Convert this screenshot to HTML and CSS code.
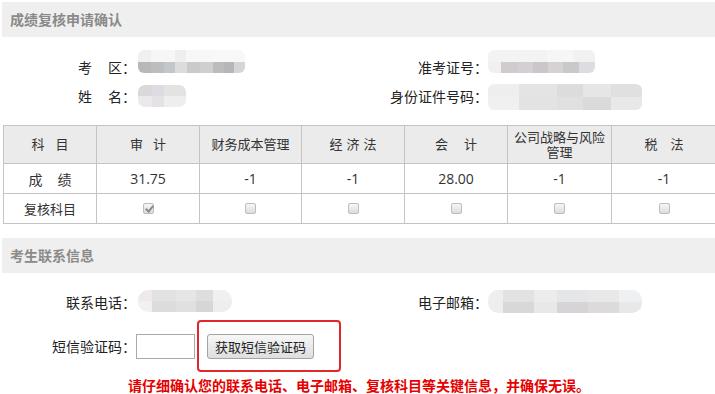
FILE: index.html
```html
<!DOCTYPE html>
<html lang="zh-CN">
<head>
<meta charset="utf-8">
<title>成绩复核申请确认</title>
<link rel="stylesheet" href="styles.css">
</head>
<body>
<div class="page">
  <div class="bar">成绩复核申请确认</div>

  <div class="info">
    <div class="lbl">考<span class="sp16"></span>区：</div>
    <div class="val"><div class="mosaic v-area"><div class="mt"></div><div class="mb"></div></div></div>
    <div class="lbl">准考证号：</div>
    <div class="val"><div class="mosaic v-ticket"><div class="mt"></div><div class="mb"></div></div></div>

    <div class="lbl">姓<span class="sp16"></span>名：</div>
    <div class="val"><div class="mosaic v-name"><div class="mt"></div><div class="mb"></div></div></div>
    <div class="lbl">身份证件号码：</div>
    <div class="val"><div class="mosaic v-id"><div class="mt"></div><div class="mb"></div></div></div>
  </div>

  <table class="scores">
    <colgroup>
      <col class="c1"><col class="c2"><col class="c3"><col class="c4"><col class="c5"><col class="c6"><col class="c7">
    </colgroup>
    <thead>
      <tr>
        <th>科<span class="sp11"></span>目</th>
        <th>审<span class="sp10"></span>计</th>
        <th>财务成本管理</th>
        <th>经<span class="sp4"></span>济<span class="sp4"></span>法</th>
        <th>会<span class="sp16"></span>计</th>
        <th class="wrap">公司战略与风险管理</th>
        <th>税<span class="sp13"></span>法</th>
      </tr>
    </thead>
    <tbody>
      <tr class="score-row">
        <td>成<span class="sp15"></span>绩</td>
        <td>31.75</td>
        <td>-1</td>
        <td>-1</td>
        <td>28.00</td>
        <td>-1</td>
        <td>-1</td>
      </tr>
      <tr class="check-row">
        <td>复核科目</td>
        <td><input type="checkbox" class="cb" checked disabled></td>
        <td><input type="checkbox" class="cb" disabled></td>
        <td><input type="checkbox" class="cb" disabled></td>
        <td><input type="checkbox" class="cb" disabled></td>
        <td><input type="checkbox" class="cb" disabled></td>
        <td><input type="checkbox" class="cb" disabled></td>
      </tr>
    </tbody>
  </table>

  <div class="bar bar2">考生联系信息</div>

  <div class="contact">
    <div class="lbl">联系电话：</div>
    <div class="val"><div class="mosaic v-phone"><div class="mt"></div><div class="mb"></div></div></div>
    <div class="lbl">电子邮箱：</div>
    <div class="val"><div class="mosaic v-mail"><div class="mt"></div><div class="mb"></div></div></div>
  </div>

  <div class="sms">
    <div class="lbl">短信验证码：</div>
    <div class="sms-ctrl">
      <input type="text" class="code-input">
      <span class="btn-wrap">
        <button type="button" class="sms-btn">获取短信验证码</button>
        <span class="mark"></span>
      </span>
    </div>
  </div>

  <p class="notice">请仔细确认您的联系电话、电子邮箱、复核科目等关键信息，并确保无误。</p>
</div>
</body>
</html>
```

FILE: styles.css
```css
html, body {
  margin: 0;
  padding: 0;
  background: #fff;
  overflow: hidden;
}
body {
  font-family: "Open Sans", "Noto Sans CJK SC", sans-serif;
  font-size: 14px;
  color: #222;
}
.page {
  padding: 2px 0 0 2px;
}
.bar {
  height: 35px;
  background: #efefef;
  color: #8a8a8a;
  font-weight: bold;
  font-size: 14px;
  line-height: 35px;
  padding-left: 8px;
  font-family: "Noto Sans CJK SC", sans-serif;
}
.bar2 {
  margin-top: 14px;
}
.sp4, .sp10, .sp11, .sp13, .sp15, .sp16 { display: inline-block; }
.sp4 { width: 4px; }
.sp10 { width: 10px; }
.sp11 { width: 11px; }
.sp13 { width: 13px; }
.sp15 { width: 15px; }
.sp16 { width: 16px; }

.info, .contact {
  display: grid;
  grid-template-columns: 134px 218px 134px 1fr;
  grid-auto-rows: 29px;
  margin-top: 16px;
}
.contact { margin-top: 15px; }
.lbl {
  text-align: right;
  line-height: 29px;
  white-space: nowrap;
  font-family: "Noto Sans CJK SC", sans-serif;
  color: #222;
}
.val {
  display: flex;
  align-items: flex-start;
}
.mosaic {
  display: flex;
  flex-direction: column;
  border-radius: 6px;
  overflow: hidden;
  filter: blur(0.7px);
}
.mosaic .mt, .mosaic .mb { flex: 1; }

.v-area { width: 107px; height: 23px; margin-top: -3px; margin-left: 2px; }
.v-area .mt { background: linear-gradient(to right, #f0f0f0 0 12%, #f6f6f6 12% 35%, #eeeeee 35% 45%, #f7f7f7 45% 70%, #f8f8f8 70% 100%); }
.v-area .mb { background: linear-gradient(to right, #b8b8b8 0 12%, #bdbdbd 12% 24%, #c3c7cb 24% 35%, #dcdcdc 35% 46%, #cacaca 46% 58%, #cfcfcf 58% 70%, #bcbcbc 70% 80%, #b7b5b7 80% 90%, #d3d5d7 90% 100%); }

.v-name { width: 48px; height: 22px; margin-top: 3px; margin-left: 2px; border-radius: 7px; }
.v-name .mt { background: linear-gradient(to right, #dcd7db 0 30%, #dedce2 30% 55%, #e3e3e3 55% 100%); }
.v-name .mb { background: linear-gradient(to right, #ece8ec 0 30%, #e4e1e7 30% 55%, #eeeeee 55% 100%); }

.v-ticket { width: 107px; height: 23px; margin-top: -3px; }
.v-ticket .mt { background: linear-gradient(to right, #f3f3f3 0 55%, #f6f6f6 55% 80%, #f1f1f1 80% 100%); }
.v-ticket .mb { background: linear-gradient(to right, #f0f0f0 0 12%, #d0cbcf 12% 28%, #d3cfd3 28% 42%, #cbc6ca 42% 56%, #d6d2d4 56% 70%, #c9c9c9 70% 85%, #dcdde0 85% 100%); }

.v-id { width: 154px; height: 26px; margin-top: 2px; }
.v-id .mt { background: linear-gradient(to right, #eeeeee 0 20%, #e4e4e4 20% 45%, #dcdcdc 45% 62%, #e6e6e6 62% 80%, #e0e0e0 80% 100%); }
.v-id .mb { background: linear-gradient(to right, #f0f0f0 0 20%, #e3e3e3 20% 45%, #e0e0e0 45% 62%, #dadada 62% 80%, #e8e8e8 80% 100%); }

.v-phone { width: 94px; height: 22px; margin-top: 2px; margin-left: 2px; border-radius: 10px; }
.v-phone .mt { background: linear-gradient(to right, #eeeaeb 0 15%, #e2e2e2 15% 40%, #e6e6e6 40% 62%, #dedede 62% 80%, #f0f0f0 80% 100%); }
.v-phone .mb { background: linear-gradient(to right, #f2f0f1 0 15%, #dcdcdc 15% 40%, #e0e0e0 40% 62%, #d6d6d6 62% 80%, #eeeeee 80% 100%); }

.v-mail { width: 154px; height: 23px; margin-top: 2px; border-radius: 10px; }
.v-mail .mt { background: linear-gradient(to right, #eeeeee 0 10%, #e2e2e2 10% 30%, #ececec 30% 45%, #e4e6e8 45% 65%, #e8e8e8 65% 85%, #eef0f2 85% 100%); }
.v-mail .mb { background: linear-gradient(to right, #eeeeee 0 10%, #d8d8d8 10% 30%, #e8e8e8 30% 45%, #d6d4d6 45% 65%, #dcdada 65% 85%, #e6e8ea 85% 100%); }

.scores {
  border-collapse: collapse;
  table-layout: fixed;
  width: 713px;
  margin: 14px 0 0 1px;
  font-size: 13px;
  color: #333;
  font-family: "Open Sans", "Noto Sans CJK SC", sans-serif;
}
.c1 { width: 93px; }
.c2 { width: 103px; }
.c3 { width: 102px; }
.c4 { width: 103px; }
.c5 { width: 103px; }
.c6 { width: 104px; }
.c7 { width: 105px; }
.scores th, .scores td {
  border: 1px solid #c4c4c4;
  text-align: center;
  padding: 0;
  font-weight: normal;
}
.scores th {
  background: #ebebeb;
  height: 37px;
  line-height: 15px;
}
.scores th.wrap {
  padding: 0 6px;
}
.scores td {
  height: 29px;
}
.score-row td {
  font-size: 14px;
}
.check-row td {
  line-height: 0;
}
.cb {
  -webkit-appearance: none;
  appearance: none;
  width: 11px;
  height: 11px;
  margin: 0;
  border: 1px solid #bdbdbd;
  border-radius: 2px;
  background: linear-gradient(#f7f7f7, #dcdcdc);
  vertical-align: middle;
  position: relative;
}
.cb:checked::after {
  content: "";
  position: absolute;
  left: 3px;
  top: 0px;
  width: 3px;
  height: 6px;
  border: solid #8a8a8a;
  border-width: 0 2px 2px 0;
  transform: rotate(40deg);
}

.sms {
  display: flex;
  align-items: center;
  height: 29px;
  margin-top: 15px;
}
.sms .lbl {
  width: 134px;
}
.sms-ctrl {
  display: flex;
  align-items: center;
}
.code-input {
  width: 59px;
  height: 25px;
  box-sizing: border-box;
  border: 1px solid #a9a9a9;
  margin: 0;
  padding: 0 3px;
}
.btn-wrap {
  position: relative;
  margin-left: 12px;
  display: inline-flex;
}
.sms-btn {
  height: 25px;
  box-sizing: border-box;
  padding: 0 7px;
  font-family: "Noto Sans CJK SC", sans-serif;
  font-size: 13px;
  color: #222;
  border: 1px solid #a4a4a4;
  border-radius: 3px;
  background: linear-gradient(#f7f7f7, #dedede);
  width: 107px;
  line-height: 22px;
}
.mark {
  position: absolute;
  left: -10px;
  top: -14px;
  width: 144px;
  height: 52px;
  box-sizing: border-box;
  border: 2px solid #e2262a;
  border-radius: 4px;
}
.notice {
  margin: 14px 0 0 126px;
  line-height: 20px;
  color: #e60000;
  font-weight: bold;
  font-size: 14px;
  font-family: "Noto Sans CJK SC", sans-serif;
}
```
